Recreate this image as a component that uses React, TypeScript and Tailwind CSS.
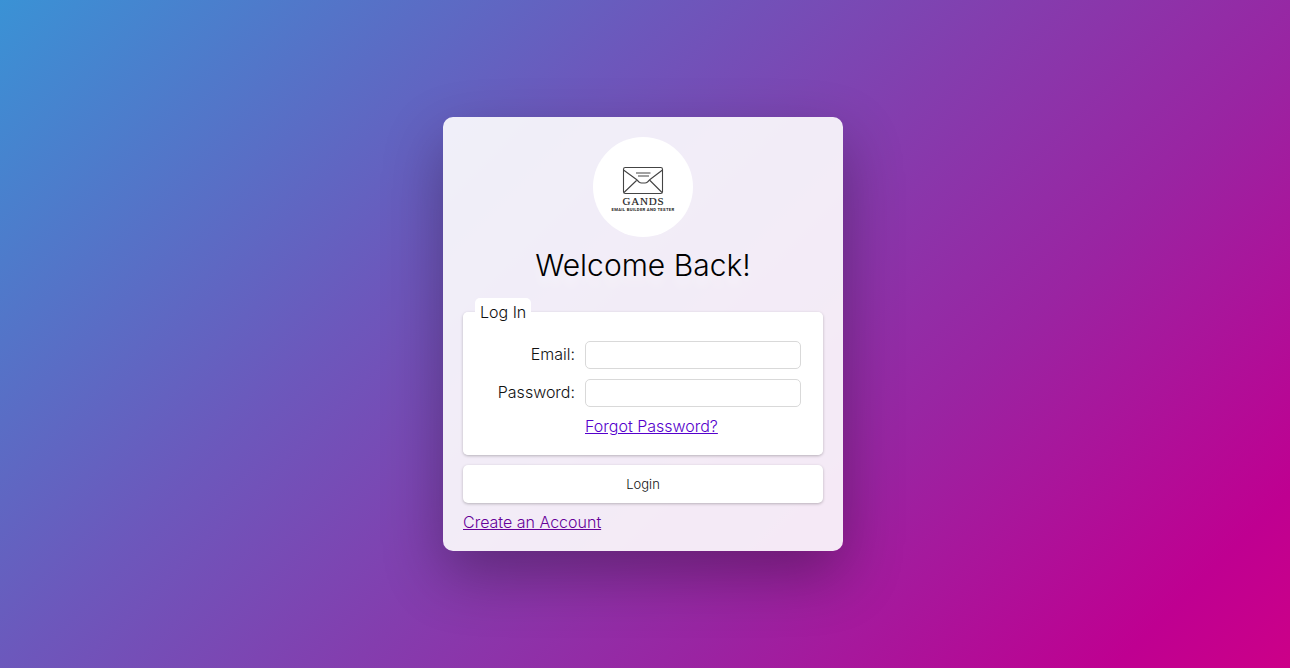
function Logo() {
  return (
    <svg viewBox="0 0 100 100" role="img" aria-label="Gands email builder and tester" className="size-[100px] rounded-full bg-white">
      <g fill="none" stroke="#444" strokeWidth="1.1" strokeLinejoin="round">
        <rect x="30.5" y="30.5" width="39" height="26" rx="1.8" />
        <path d="M30.5 33 43.500 42.500 46 45Q47.200 46 48.500 46H52Q53.300 46 54.500 45L57 42.500 69.500 33M31 55.500 43.500 43.500M69 55.500 57 43.500" />
        <path d="M43 36H57.500M45 39H56" />
      </g>
      <text x="50.500" y="67.500" textAnchor="middle" fontFamily="'Liberation Serif', serif" fontSize="11" letterSpacing="0.800" fill="#222" stroke="#222" strokeWidth="0.150">GANDS</text>
      <text x="50" y="73.500" textAnchor="middle" fontFamily="'Roboto', sans-serif" fontWeight="700" fontSize="4.200" letterSpacing="0.300" fill="#222">EMAIL BUILDER AND TESTER</text>
    </svg>
  );
}

const field = "h-7 w-full min-w-0 rounded-[5px] border border-[#d9d9d9] bg-white px-2 text-sm outline-none focus:border-[#8040b0]";
const fieldLabel = "self-start text-right leading-[26px]";
const raised = "rounded-[5px] bg-white shadow-[0_1px_3px_rgba(0,0,0,0.25)]";

export default function App() {
  return (
    <main className="flex min-h-screen items-center justify-center bg-[linear-gradient(135deg,#3a92d5_0%,#6c58bc_34%,#843dae_52%,#9a24a2_69%,#bf0091_91%,#cc0088_100%)] py-5 pr-1 font-['Inter','Liberation_Sans',sans-serif] text-base leading-5 font-light text-[#111]">
      <form onSubmit={(e) => e.preventDefault()} className="w-full max-w-[400px] rounded-[10px] bg-white/90 p-5 shadow-[0_24px_60px_rgba(0,0,0,0.3)]">
        <div className="flex justify-center">
          <Logo />
        </div>
        <h1 className="mt-2.5 mb-[15px] text-center text-[30px] leading-9 font-light text-black [text-shadow:0_10px_10px_rgba(255,255,255,0.5)]">Welcome Back!</h1>
        <fieldset className={`px-3 pt-[15px] pb-5 ${raised}`}>
          <legend className="rounded-[5px] bg-white px-[5px] py-1">Log In</legend>
          <div className="grid grid-cols-[90px_1fr] items-center gap-2.5 px-2.5">
            <label htmlFor="email" className={fieldLabel}>Email:</label>
            <input id="email" type="email" className={field} />
            <label htmlFor="password" className={fieldLabel}>Password:</label>
            <input id="password" type="password" className={field} />
            <a href="#forgot" className="col-start-2 justify-self-start leading-[18px] text-[#5500cc] underline">Forgot Password?</a>
          </div>
        </fieldset>
        <button type="submit" className={`my-2.5 block h-[38px] w-full cursor-pointer text-[13px] ${raised}`}>Login</button>
        <a href="#register" className="block w-fit leading-[18px] text-[#660099] underline">Create an Account</a>
      </form>
    </main>
  );
}
